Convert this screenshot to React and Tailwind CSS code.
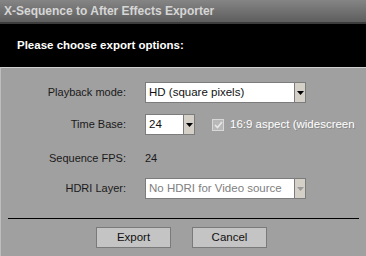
import React from 'react';

const font = { fontFamily: '"Liberation Sans", Arial, sans-serif' };

function Select({ value, width, disabled }) {
  return (
    <div className={`flex h-[21px] border border-[#7c7c7c] ${width}`}>
      <div className={`flex-1 bg-white pl-[3px] flex items-center text-[11.5px] leading-none ${disabled ? 'text-[#808080]' : 'text-[#111]'}`}>
        {value}
      </div>
      <div className="w-[11px] bg-[#d4d0c8] border-l border-[#7c7c7c] flex items-center justify-center">
        <svg width="7" height="4" viewBox="0 0 7 4">
          <path d="M0 0h7L3.5 4z" fill={disabled ? '#9a9a9a' : '#000'} />
        </svg>
      </div>
    </div>
  );
}

function Row({ label, children, className = '' }) {
  return (
    <div className={`flex items-center h-[21px] ${className}`}>
      <div className="w-[125px] text-right text-[11px] text-[#1a1a1a]">{label}</div>
      <div className="ml-[19px] flex items-center">{children}</div>
    </div>
  );
}

export default function App() {
  return (
    <div className="w-[366px] h-[256px] bg-black flex flex-col overflow-hidden" style={font}>
      <div className="h-[24px] bg-gradient-to-b from-[#858585] to-[#5e5e5e] border-b-2 border-[#3c3c3c] flex items-center pl-[4px]">
        <span className="text-[12px] font-bold text-[#d6d6d6]">X-Sequence to After Effects Exporter</span>
      </div>
      <div className="h-[43px] flex items-center pl-[17px]">
        <span className="text-[11.5px] font-bold text-white">Please choose export options:</span>
      </div>
      <div className="flex-1 bg-[#a0a0a0] border-t border-[#cfcfcf] border-l border-l-[#bdbdbd] flex flex-col">
        <Row label="Playback mode:" className="mt-[14px]">
          <Select value="HD (square pixels)" width="w-[161px]" />
        </Row>
        <Row label="Time Base:" className="mt-[11px]">
          <Select value="24" width="w-[50px]" />
          <div className="ml-[17px] w-[12px] h-[12px] border border-[#d8d8d8] bg-[#b8b8b8] flex items-center justify-center">
            <svg width="9" height="8" viewBox="0 0 9 8">
              <path d="M1 4l2.5 2.5L8 1" stroke="#e8e8e8" strokeWidth="1.6" fill="none" />
            </svg>
          </div>
          <span className="ml-[6px] text-[11.5px] text-white [text-shadow:1px_1px_0_#8a8a8a] whitespace-nowrap">16:9 aspect (widescreen</span>
        </Row>
        <Row label="Sequence FPS:" className="mt-[13px]">
          <span className="text-[11px] text-[#1a1a1a]">24</span>
        </Row>
        <Row label="HDRI Layer:" className="mt-[9px]">
          <Select value="No HDRI for Video source" width="w-[161px]" disabled />
        </Row>
        <div className="mx-[7px] mt-[19px] h-px bg-black" />
        <div className="flex justify-center gap-[21px] mt-[8px] pr-[4px]">
          <button className="w-[75px] h-[21px] bg-[#c4c4c4] border border-[#7a7a7a] text-[11.5px] text-[#111]">Export</button>
          <button className="w-[75px] h-[21px] bg-[#c4c4c4] border border-[#7a7a7a] text-[11.5px] text-[#111]">Cancel</button>
        </div>
      </div>
    </div>
  );
}
